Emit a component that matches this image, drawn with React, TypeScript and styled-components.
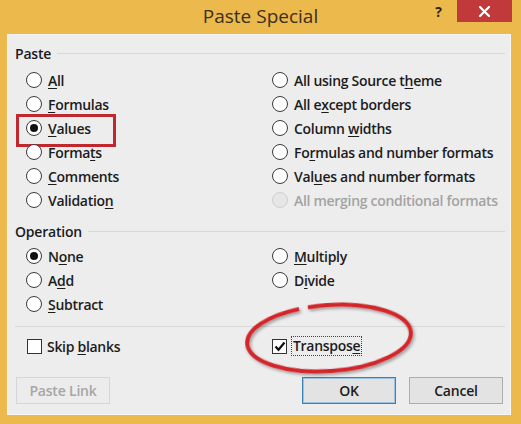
import React from 'react';
import styled, { createGlobalStyle } from 'styled-components';

const Global = createGlobalStyle`
  html, body { margin: 0; padding: 0; background: #EBB94C; }
  * { box-sizing: border-box; }
`;

const Window = styled.div`
  position: relative;
  width: 521px;
  height: 424px;
  background: #EBB94C;
  display: flex;
  flex-direction: column;
  font-family: "Open Sans", "Noto Sans", sans-serif;
  color: #1c1c1c;
  overflow: hidden;
`;

const TitleBar = styled.div`
  height: 34px;
  display: grid;
  grid-template-columns: 1fr auto 1fr;
  align-items: start;
`;

const Title = styled.div`
  grid-column: 2;
  font-size: 19px;
  line-height: 32px;
  color: #3a301c;
`;

const TitleButtons = styled.div`
  grid-column: 3;
  justify-self: end;
  display: flex;
  align-items: flex-start;
  margin-right: 9px;
`;

const Help = styled.div`
  font-size: 14px;
  font-weight: 700;
  color: #2a2418;
  line-height: 22px;
  margin-right: 15px;
  margin-top: 1px;
`;

const Close = styled.div`
  width: 55px;
  height: 22px;
  background: #C1393B;
  display: flex;
  align-items: center;
  justify-content: center;
`;

const Client = styled.div`
  flex: 1;
  margin: 0 10px 9px 7px;
  background: #EDEDED;
  border: 1px solid #F6F6F6;
  padding: 8px 0 0 0;
  display: flex;
  flex-direction: column;
`;

const Legend = styled.div<{ $mt?: number }>`
  display: flex;
  align-items: center;
  height: 20px;
  padding-left: 7px;
  margin-top: ${p => p.$mt ?? 0}px;
  font-size: 14px;
  font-weight: 600;
  letter-spacing: -0.2px;
  &::after {
    content: "";
    flex: 1;
    height: 1px;
    background: #D8D8D8;
    margin: 0 5px 0 6px;
  }
`;

const OptionGrid = styled.div<{ $mt: number }>`
  display: grid;
  grid-template-columns: 246px 1fr;
  grid-auto-rows: 24px;
  padding-left: 18px;
  margin-top: ${p => p.$mt}px;
`;

const Option = styled.div<{ $highlight?: boolean; $disabled?: boolean }>`
  position: relative;
  display: flex;
  align-items: center;
  gap: 6px;
  font-size: 14px;
  font-weight: 600;
  letter-spacing: -0.3px;
  color: ${p => (p.$disabled ? '#a3a3a3' : '#1c1c1c')};
  white-space: nowrap;
  ${p =>
    p.$highlight &&
    `&::before {
      content: "";
      position: absolute;
      left: -10px;
      top: -2px;
      width: 94px;
      height: 27px;
      border: 3px solid #C0282D;
    }`}
`;

const Radio = styled.span<{ $checked?: boolean; $disabled?: boolean }>`
  width: 16px;
  height: 16px;
  border-radius: 50%;
  border: 1px solid ${p => (p.$disabled ? '#cfcfcf' : '#3a3a3a')};
  background: ${p => (p.$disabled ? '#e6e6e6' : '#ffffff')};
  display: flex;
  align-items: center;
  justify-content: center;
  flex: none;
  &::after {
    content: "";
    width: 8px;
    height: 8px;
    border-radius: 50%;
    background: #111;
    display: ${p => (p.$checked ? 'block' : 'none')};
  }
`;

const Key = styled.span`
  text-decoration: underline;
  text-underline-offset: 2px;
`;

const Separator = styled.div`
  height: 1px;
  background: #D8D8D8;
  margin: 10px 5px 0 7px;
`;

const CheckRow = styled.div`
  display: grid;
  grid-template-columns: 245px 1fr;
  padding-left: 19px;
  height: 20px;
  margin-top: 9px;
`;

const CheckOption = styled.div`
  display: flex;
  align-items: center;
  gap: 5px;
  font-size: 14px;
  font-weight: 600;
  letter-spacing: -0.3px;
  white-space: nowrap;
`;

const Box = styled.span`
  width: 15px;
  height: 15px;
  border: 1px solid #333;
  background: #fff;
  display: flex;
  align-items: center;
  justify-content: center;
  flex: none;
`;

const Focus = styled.span`
  outline: 1px dotted #444;
  outline-offset: 0px;
  padding: 0 1px;
  line-height: 18px;
`;

const ButtonRow = styled.div`
  display: flex;
  align-items: center;
  margin-top: 21px;
  padding: 0 7px 0 8px;
  gap: 13px;
`;

const Button = styled.div<{ $variant?: 'default' | 'disabled' | 'primary' }>`
  width: 94px;
  height: 27px;
  display: flex;
  align-items: center;
  justify-content: center;
  font-size: 14px;
  font-weight: 600;
  letter-spacing: -0.2px;
  background: ${p => (p.$variant === 'disabled' ? '#ECECEC' : '#E3E3E3')};
  border: 1px solid
    ${p => (p.$variant === 'primary' ? '#3C7FB1' : p.$variant === 'disabled' ? '#D6D6D6' : '#ADADAD')};
  box-shadow: ${p => (p.$variant === 'primary' ? 'inset 0 0 0 1px #9CC3E2' : 'none')};
  color: ${p => (p.$variant === 'disabled' ? '#A6A6A6' : '#1c1c1c')};
`;

const Spacer = styled.div`
  flex: 1;
`;

const Oval = styled.svg`
  position: absolute;
  left: 0;
  top: 0;
  width: 521px;
  height: 424px;
  pointer-events: none;
`;

type Opt = { label: React.ReactNode; checked?: boolean; disabled?: boolean; highlight?: boolean };

const u = (before: string, key: string, after: string) => (
  <>
    {before}
    <Key>{key}</Key>
    {after}
  </>
);

const pasteOptions: Opt[] = [
  { label: u('', 'A', 'll') },
  { label: u('All using Source t', 'h', 'eme') },
  { label: u('', 'F', 'ormulas') },
  { label: u('All e', 'x', 'cept borders') },
  { label: u('', 'V', 'alues'), checked: true, highlight: true },
  { label: u('Column ', 'w', 'idths') },
  { label: u('Forma', 't', 's') },
  { label: u('Fo', 'r', 'mulas and number formats') },
  { label: u('', 'C', 'omments') },
  { label: u('Val', 'u', 'es and number formats') },
  { label: u('Validatio', 'n', '') },
  { label: 'All merging conditional formats', disabled: true },
];

const opOptions: (Opt | null)[] = [
  { label: u('N', 'o', 'ne'), checked: true },
  { label: u('', 'M', 'ultiply') },
  { label: u('A', 'd', 'd') },
  { label: u('D', 'i', 'vide') },
  { label: u('', 'S', 'ubtract') },
  null,
];

const Options = ({ items, mt }: { items: (Opt | null)[]; mt: number }) => (
  <OptionGrid $mt={mt}>
    {items.map((o, i) =>
      o ? (
        <Option key={i} $highlight={o.highlight} $disabled={o.disabled}>
          <Radio $checked={o.checked} $disabled={o.disabled} />
          <span>{o.label}</span>
        </Option>
      ) : (
        <div key={i} />
      )
    )}
  </OptionGrid>
);

export default function App() {
  return (
    <>
      <Global />
      <Window>
        <TitleBar>
          <Title>Paste Special</Title>
          <TitleButtons>
            <Help>?</Help>
            <Close>
              <svg width="11" height="11" viewBox="0 0 11 11">
                <path d="M1 1 L10 10 M10 1 L1 10" stroke="#fff" strokeWidth="2.2" strokeLinecap="round" />
              </svg>
            </Close>
          </TitleButtons>
        </TitleBar>
        <Client>
          <Legend>Paste</Legend>
          <Options items={pasteOptions} mt={5} />
          <Legend $mt={9}>Operation</Legend>
          <Options items={opOptions} mt={3} />
          <Separator />
          <CheckRow>
            <CheckOption>
              <Box />
              <span>{u('Skip ', 'b', 'lanks')}</span>
            </CheckOption>
            <CheckOption>
              <Box>
                <svg width="12" height="11" viewBox="0 0 12 11">
                  <path d="M1.5 5.5 L4.5 8.8 L10.5 1.5" stroke="#111" strokeWidth="2.2" fill="none" />
                </svg>
              </Box>
              <Focus>{u('Transpos', 'e', '')}</Focus>
            </CheckOption>
          </CheckRow>
          <ButtonRow>
            <Button $variant="disabled">Paste Link</Button>
            <Spacer />
            <Button $variant="primary">OK</Button>
            <Button>Cancel</Button>
          </ButtonRow>
        </Client>
        <Oval viewBox="0 0 521 424">
          <defs>
            <filter id="sh" x="-10%" y="-20%" width="120%" height="140%">
              <feDropShadow dx="1.5" dy="2" stdDeviation="1.5" floodColor="#000" floodOpacity="0.35" />
            </filter>
          </defs>
          <ellipse
            cx="329"
            cy="338"
            rx="82"
            ry="33"
            transform="rotate(-4 329 338)"
            fill="none"
            stroke="#D2252B"
            strokeWidth="4"
            strokeDasharray="255 9 140"
            filter="url(#sh)"
          />
        </Oval>
      </Window>
    </>
  );
}
